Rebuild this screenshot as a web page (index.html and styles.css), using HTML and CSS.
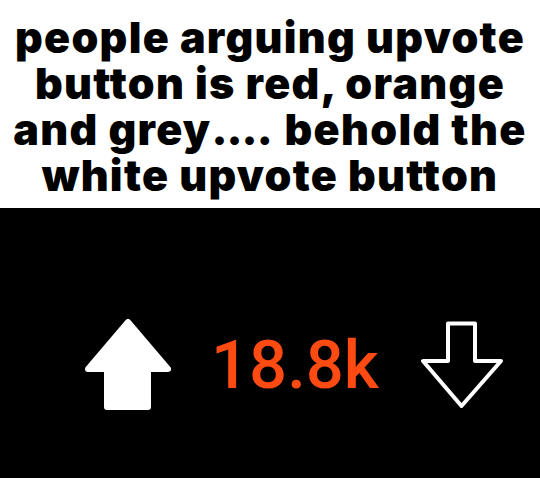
FILE: index.html
```html
<!DOCTYPE html>
<html>
<head>
<meta charset="utf-8">
<link rel="stylesheet" href="styles.css">
</head>
<body>
<div class="meme">
  <div class="caption">
    <p>people arguing upvote<br>button is red, orange<br>and grey<span class="dots">....</span> behold the<br>white upvote button</p>
  </div>
  <div class="votes">
    <svg class="up" width="86" height="92" viewBox="0 0 86 92">
      <polygon points="43,3 83,50 63,50 63,88 22,88 22,50 3,50" fill="#fff" stroke="#fff" stroke-width="6" stroke-linejoin="round"/>
    </svg>
    <span class="count">18.8k</span>
    <svg class="down" width="84" height="88" viewBox="0 0 84 88">
      <polygon points="28,2.5 55,2.5 55,40 81,40 41.5,85 3,40 28,40" fill="none" stroke="#fff" stroke-width="4" stroke-linejoin="round"/>
    </svg>
  </div>
</div>
</body>
</html>
```
FILE: styles.css
```css
html, body {
  margin: 0;
  padding: 0;
  background: #fff;
}
.meme {
  width: 540px;
  height: 478px;
  display: flex;
  flex-direction: column;
}
.caption {
  height: 208px;
  background: #fff;
  display: flex;
  justify-content: center;
  align-items: center;
}
.caption p {
  margin: 0;
  padding-top: 4px;
  font-family: Inter, "Liberation Sans", sans-serif;
  font-weight: 900;
  font-size: 43px;
  letter-spacing: 1.3px;
  line-height: 46px;
  text-align: center;
  color: #000;
}
.caption .dots {
  letter-spacing: -1px;
  margin-right: 3px;
}
.votes {
  flex: 1;
  background: #000;
  display: flex;
  align-items: center;
  padding-left: 85px;
  padding-top: 44px;
  box-sizing: border-box;
}
.up {
  display: block;
  filter: blur(0.6px);
}
.count {
  margin-left: 40px;
  margin-right: 41px;
  font-family: Roboto, "Liberation Sans", sans-serif;
  font-weight: 500;
  font-size: 67px;
  line-height: 1;
  color: #ff4a12;
  filter: blur(0.5px);
}
.down {
  display: block;
  filter: blur(0.5px);
}
```
